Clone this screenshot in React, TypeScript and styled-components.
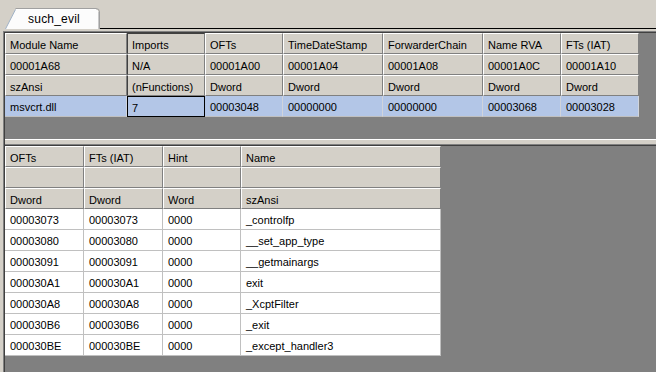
import React from "react";
import styled, { createGlobalStyle, css } from "styled-components";

const Global = createGlobalStyle`
  html, body { margin: 0; padding: 0; background: #d4d0c8; }
  body { font-family: "Liberation Sans", Arial, sans-serif; font-size: 11px; color: #000; }
`;

const Window = styled.div`
  width: 656px;
  height: 372px;
  overflow: hidden;
  display: flex;
  flex-direction: column;
  background: #d4d0c8;
`;

const TabStrip = styled.div`
  display: flex;
  height: 29px;
  flex: none;
`;

const TabLead = styled.div`
  width: 5px;
  flex: none;
`;

const Tab = styled.div`
  position: relative;
  width: 95px;
  height: 21px;
  margin-top: 8px;
  flex: none;
  display: flex;
  align-items: center;
  justify-content: center;
`;

const TabShape = styled.svg`
  position: absolute;
  left: 0;
  top: 0;
`;

const TabLabel = styled.span`
  position: relative;
  font-size: 12px;
  letter-spacing: 0.2px;
  padding-left: 3px;
  padding-top: 1px;
`;

const TabRest = styled.div`
  flex: 1;
  border-bottom: 1px solid #000;
`;

const Frame = styled.div`
  flex: 1;
  min-height: 0;
  display: flex;
  padding: 2px 0 0 3px;
`;

const Sunken = styled.div`
  flex: 1;
  min-height: 0;
  display: flex;
  border-left: 1px solid #808080;
  border-top: 1px solid #808080;
`;

const Inner = styled.div`
  flex: 1;
  min-height: 0;
  display: flex;
  flex-direction: column;
  background: #808080;
  border-left: 1px solid #404040;
  border-top: 1px solid #404040;
`;

const TopPane = styled.div`
  height: 106px;
  flex: none;
  overflow: hidden;
`;

const Splitter = styled.div`
  height: 4px;
  flex: none;
  background: #d4d0c8;
  border-top: 1px solid #ffffff;
  border-bottom: 1px solid #808080;
`;

const BottomPane = styled.div`
  flex: 1;
  min-height: 0;
  overflow: hidden;
  border-top: 1px solid #404040;
`;

const Grid = styled.div<{ $cols: string }>`
  display: grid;
  grid-template-columns: ${(p) => p.$cols};
  grid-auto-rows: 21px;
  width: max-content;
`;

const cellBase = css`
  box-sizing: border-box;
  display: flex;
  align-items: center;
  padding: 2px 0 0 4px;
  white-space: nowrap;
  overflow: hidden;
`;

const HeadCell = styled.div<{ $pressed?: boolean; $first?: boolean }>`
  ${cellBase}
  background: #d4d0c8;
  border-top: 1px solid ${(p) => (p.$pressed && p.$first ? "#404040" : "#ffffff")};
  border-left: 1px solid ${(p) => (p.$pressed ? "#404040" : "#ffffff")};
  border-right: 1px solid #808080;
  border-bottom: 1px solid #808080;
`;

const DataCell = styled.div`
  ${cellBase}
  background: #ffffff;
  padding-left: 5px;
  border-right: 1px solid #c0c0c0;
  border-bottom: 1px solid #c0c0c0;
`;

const SelCell = styled.div<{ $focus?: boolean }>`
  ${cellBase}
  background: #b3c6e7;
  padding-left: 5px;
  border-right: 1px solid #d0d4dc;
  border-bottom: 1px solid #c0c0c0;
  ${(p) =>
    p.$focus &&
    css`
      border: 1px solid #000;
      padding-left: 4px;
    `}
`;

const topCols = "122px 78px 78px 100px 100px 78px 78px";
const topHead: string[][] = [
  ["Module Name", "Imports", "OFTs", "TimeDateStamp", "ForwarderChain", "Name RVA", "FTs (IAT)"],
  ["00001A68", "N/A", "00001A00", "00001A04", "00001A08", "00001A0C", "00001A10"],
  ["szAnsi", "(nFunctions)", "Dword", "Dword", "Dword", "Dword", "Dword"],
];
const topSel = ["msvcrt.dll", "7", "00003048", "00000000", "00000000", "00003068", "00003028"];

const botCols = "79px 79px 78px 200px";
const botHead: string[][] = [
  ["OFTs", "FTs (IAT)", "Hint", "Name"],
  ["", "", "", ""],
  ["Dword", "Dword", "Word", "szAnsi"],
];
const botRows: string[][] = [
  ["00003073", "00003073", "0000", "_controlfp"],
  ["00003080", "00003080", "0000", "__set_app_type"],
  ["00003091", "00003091", "0000", "__getmainargs"],
  ["000030A1", "000030A1", "0000", "exit"],
  ["000030A8", "000030A8", "0000", "_XcptFilter"],
  ["000030B6", "000030B6", "0000", "_exit"],
  ["000030BE", "000030BE", "0000", "_except_handler3"],
];

export default function App() {
  return (
    <>
      <Global />
      <Window>
        <TabStrip>
          <TabLead />
          <Tab>
            <TabShape width="95" height="21" viewBox="0 0 95 21">
              <path d="M0.5 21 L10.5 1.5 L91 1.5 Q93.5 1.5 93.5 4 L93.5 21 Z" fill="#fcfcfc" />
              <path d="M0.5 21 L10.5 1.5" stroke="#9fb1c6" strokeWidth="1" fill="none" />
              <path d="M10.5 0.5 L91 0.5 Q94.5 0.5 94.5 4 L94.5 21" stroke="#a0a0a0" strokeWidth="1" fill="none" />
              <path d="M11 1.5 L91 1.5" stroke="#ffffff" strokeWidth="1" fill="none" />
              <path d="M93.5 4 L93.5 21" stroke="#c8c8c8" strokeWidth="1" fill="none" />
            </TabShape>
            <TabLabel>such_evil</TabLabel>
          </Tab>
          <TabRest />
        </TabStrip>
        <Frame>
          <Sunken>
            <Inner>
              <TopPane>
                <Grid $cols={topCols}>
                  {topHead.map((row, r) =>
                    row.map((t, c) => (
                      <HeadCell key={`h${r}-${c}`} $pressed={c === 1} $first={r === 0}>
                        {t}
                      </HeadCell>
                    ))
                  )}
                  {topSel.map((t, c) => (
                    <SelCell key={`s${c}`} $focus={c === 1}>
                      {t}
                    </SelCell>
                  ))}
                </Grid>
              </TopPane>
              <Splitter />
              <BottomPane>
                <Grid $cols={botCols}>
                  {botHead.map((row, r) =>
                    row.map((t, c) => <HeadCell key={`bh${r}-${c}`}>{t}</HeadCell>)
                  )}
                  {botRows.map((row, r) =>
                    row.map((t, c) => <DataCell key={`bd${r}-${c}`}>{t}</DataCell>)
                  )}
                </Grid>
              </BottomPane>
            </Inner>
          </Sunken>
        </Frame>
      </Window>
    </>
  );
}
